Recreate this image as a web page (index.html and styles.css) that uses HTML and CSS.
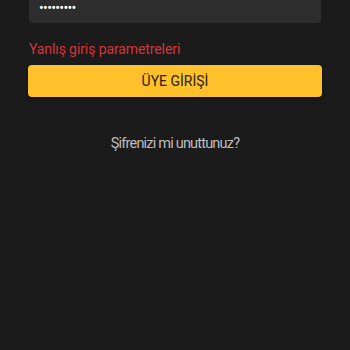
FILE: index.html
```html
<!DOCTYPE html>
<html lang="tr">
<head>
<meta charset="utf-8">
<link rel="stylesheet" href="styles.css">
</head>
<body>
<main class="form">
  <div class="field"><span class="dots">•••••••••</span></div>
  <p class="error">Yanlış giriş parametreleri</p>
  <button class="login">ÜYE GİRİŞİ</button>
  <p class="forgot">Şifrenizi mi unuttunuz?</p>
</main>
</body>
</html>
```

FILE: styles.css
```css
html, body {
  margin: 0;
  padding: 0;
  background: #1b1b1b;
  height: 100%;
}
body {
  font-family: Roboto, "Liberation Sans", sans-serif;
}
.form {
  display: flex;
  flex-direction: column;
  padding: 0 28px;
}
.field {
  height: 23px;
  margin: 0 1px;
  background: #2d2d2d;
  border-radius: 0 0 3px 3px;
  padding: 0 10px;
  box-sizing: border-box;
  display: flex;
  align-items: flex-start;
}
.dots {
  color: #ffffff;
  font-size: 14px;
  line-height: 16px;
  letter-spacing: -0.65px;
}
.error {
  margin: 18px 0 0 1px;
  color: #d8333a;
  font-size: 14px;
  letter-spacing: -0.1px;
  line-height: 16px;
}
.login {
  margin-top: 8px;
  height: 32px;
  border: none;
  border-radius: 4px;
  background: #fec02b;
  color: #2a2104;
  font-family: Roboto, "Liberation Sans", sans-serif;
  font-size: 14px;
  box-shadow: 0 1px 3px rgba(0,0,0,0.6);
  padding: 0;
}
.forgot {
  margin: 38px 0 0;
  text-align: center;
  color: #bdbdbd;
  font-size: 14.5px;
  letter-spacing: -0.8px;
  line-height: 18px;
}
```
